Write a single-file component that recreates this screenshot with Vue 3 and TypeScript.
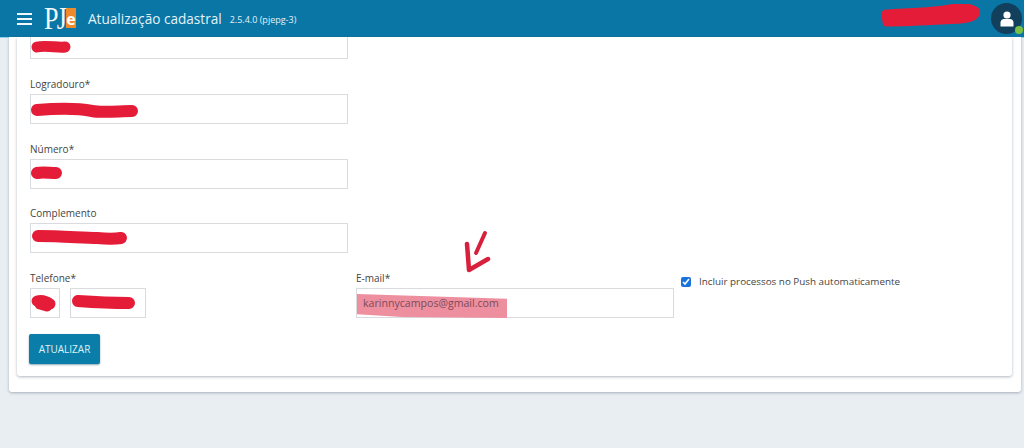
<script setup lang="ts">
interface Field {
  label: string
  scribble: string
  left: number
  width: number
  height: number
  gap: number
}

const fields: Field[] = [
  { label: 'Logradouro*', scribble: 'M5 9 C30 7 50 8 60 10 C70 12 88 10 100 10', left: 1, width: 110, height: 16, gap: 18 },
  { label: 'Número*', scribble: 'M5 7 C10 6 18 7 24 7', left: 1, width: 32, height: 14, gap: 18 },
  { label: 'Complemento', scribble: 'M5 6 C30 6 50 8 64 8 C74 9 82 9 88 8', left: 2, width: 97, height: 14, gap: 17 }
]
</script>

<template>
  <div class="page">
    <header class="topbar">
      <div class="menu" aria-label="Menu">
        <span></span><span></span><span></span>
      </div>
      <div class="logo"><span class="pj">PJ</span><span class="e">e</span></div>
      <span class="title">Atualização cadastral</span>
      <span class="version">2.5.4.0 (pjepg-3)</span>
      <svg class="head-scribble" width="102" height="24" viewBox="0 0 102 24">
        <path d="M6 10 C30 9 55 8 70 5 C80 3 90 4 95 7 C97 11 92 14 80 15 C60 16 30 18 7 18 Z" fill="#e41c38" stroke="#e41c38" stroke-width="9" stroke-linejoin="round" />
      </svg>
      <div class="avatar">
        <svg width="14" height="16" viewBox="0 0 14 16">
          <circle cx="7" cy="4" r="3.6" fill="#fff" />
          <path d="M0.5 15.5 V11.5 C0.5 9.3 2.2 8 4 8 H10 C11.8 8 13.5 9.3 13.5 11.5 V15.5 Z" fill="#fff" />
        </svg>
        <i class="status"></i>
      </div>
    </header>

    <main class="outer">
      <section class="inner">
        <div class="input cut">
          <svg class="scribble first" width="42" height="14" viewBox="0 0 42 14">
            <path d="M5 7 C14 5 26 8 33 7" fill="none" stroke="#e41c38" stroke-width="11" stroke-linecap="round" />
          </svg>
        </div>

        <div v-for="f in fields" :key="f.label" class="field" :style="{ marginTop: f.gap + 'px' }">
          <label>{{ f.label }}</label>
          <div class="input">
            <svg class="scribble" :style="{ left: f.left + 'px' }" :width="f.width" :height="f.height" :viewBox="`0 0 ${f.width} ${f.height}`">
              <path :d="f.scribble" fill="none" stroke="#e41c38" stroke-width="12" stroke-linecap="round" />
            </svg>
          </div>
        </div>

        <div class="last-row">
          <div class="phone">
            <label>Telefone*</label>
            <div class="phone-inputs">
              <div class="input ddd">
                <svg class="scribble" width="26" height="18" viewBox="0 0 26 18">
                  <path d="M5 6 C9 5 14 6 18 9 M8 9 L15 11" fill="none" stroke="#e41c38" stroke-width="11" stroke-linecap="round" />
                </svg>
              </div>
              <div class="input tel">
                <svg class="scribble" width="68" height="14" viewBox="0 0 68 14">
                  <path d="M6 6 C20 7 42 8 57 8" fill="none" stroke="#e41c38" stroke-width="12" stroke-linecap="round" />
                </svg>
              </div>
            </div>
          </div>

          <div class="email">
            <svg class="arrow" width="32" height="46" viewBox="0 0 32 46">
              <path d="M25 6 L16 26" fill="none" stroke="#d8203c" stroke-width="4" stroke-linecap="round" />
              <path d="M7 17 L9 43 L28 32" fill="none" stroke="#d8203c" stroke-width="4.5" stroke-linecap="round" stroke-linejoin="round" />
            </svg>
            <label>E-mail*</label>
            <div class="input mail">
              <span class="highlight"></span>
              <span class="value">karinnycampos@gmail.com</span>
            </div>
          </div>

          <label class="push">
            <input type="checkbox" checked />
            <span>Incluir processos no Push automaticamente</span>
          </label>
        </div>

        <button class="submit" type="button">ATUALIZAR</button>
      </section>
    </main>
  </div>
</template>

<style>
html, body {
  margin: 0;
  background: #e9eef2;
}
</style>

<style scoped>
.page {
  width: 1024px;
  height: 448px;
  overflow: hidden;
  background: #e9eef2;
  font-family: "Open Sans", "Noto Sans", sans-serif;
  color: #444;
}
.topbar {
  height: 37px;
  background: #0a76a6;
  border-bottom: 1px solid #8fd0ea;
  display: flex;
  align-items: center;
  color: #e4f2f8;
  padding: 0 2px 0 17px;
}
.menu {
  width: 15px;
  display: flex;
  flex-direction: column;
  gap: 3px;
  margin-right: 12px;
}
.menu span {
  height: 2px;
  background: #f0f8fb;
}
.logo {
  display: flex;
  align-items: flex-start;
  height: 32px;
  width: 33px;
  margin-right: 11px;
}
.pj {
  display: block;
  width: 22px;
  flex: none;
  font-family: "Liberation Serif", serif;
  font-size: 31px;
  line-height: 32px;
  color: #f2f8fb;
  letter-spacing: -2px;
  transform: scaleX(0.84);
  transform-origin: left center;
}
.e {
  width: 10px;
  height: 20px;
  box-sizing: border-box;
  padding-top: 2px;
  margin-top: 5px;
  background: #ee8a2c;
  color: #fff;
  font-family: "Open Sans", sans-serif;
  font-weight: 700;
  font-size: 16px;
  line-height: 18px;
  text-align: center;
  flex: none;
}
.title {
  font-size: 13.6px;
  margin-right: 8px;
}
.version {
  font-size: 9px;
  margin-top: 2px;
}
.head-scribble {
  margin-left: auto;
  margin-right: 9px;
  margin-top: -3px;
  margin-bottom: 3px;
}
.avatar {
  width: 31px;
  height: 31px;
  border-radius: 50%;
  background: #123f5c;
  display: flex;
  align-items: center;
  justify-content: center;
  position: relative;
}
.status {
  position: absolute;
  right: -1px;
  bottom: 0;
  width: 8px;
  height: 8px;
  border-radius: 50%;
  background: #7ac143;
}
.outer {
  margin: -1px 3px 0 9px;
  height: 355px;
  background: #fff;
  border-radius: 0 0 3px 3px;
  box-shadow: 0 1px 3px rgba(80, 95, 115, 0.45);
  padding: 0 9px 0 8px;
}
.inner {
  height: 339px;
  box-sizing: border-box;
  background: #fff;
  border-radius: 0 0 3px 3px;
  box-shadow: 0 1px 3px rgba(80, 95, 115, 0.45);
  padding: 0 13px;
}
.input {
  position: relative;
  width: 318px;
  height: 30px;
  box-sizing: border-box;
  border: 1px solid #d9dbdf;
  background: #fff;
}
.cut {
  height: 22px;
  border-top: 0;
}
label {
  display: block;
  font-size: 10px;
  line-height: 15px;
  margin-bottom: 2px;
  color: #444;
}
.scribble {
  position: absolute;
  left: 1px;
  top: 6px;
  overflow: visible;
}
.first {
  top: 3px;
}
.last-row {
  display: flex;
  margin-top: 18px;
}
.phone {
  width: 326px;
}
.phone-inputs {
  display: flex;
  gap: 10px;
}
.ddd {
  width: 30px;
}
.tel {
  width: 76px;
}
.email {
  position: relative;
  width: 318px;
  margin-right: 7px;
}
.arrow {
  position: absolute;
  left: 104px;
  top: -44px;
}
.mail {
  display: flex;
  align-items: center;
  padding-left: 6px;
}
.highlight {
  position: absolute;
  left: 0;
  top: 5px;
  width: 150px;
  height: 24px;
  background: #ee8f9f;
  clip-path: polygon(0 0, 100% 20%, 100% 100%, 30% 96%, 0 84%);
}
.value {
  position: relative;
  font-size: 10.6px;
  color: #7d4a58;
}
.push {
  display: flex;
  align-items: center;
  height: 15px;
  margin: 3px 0 0;
  align-self: flex-start;
  gap: 8px;
}
.push input {
  width: 10px;
  height: 10px;
  margin: 0;
  accent-color: #1a73d8;
}
.push span {
  font-size: 9.85px;
}
.submit {
  display: block;
  margin: 16px 0 0 -1px;
  width: 71px;
  height: 30px;
  border: 0;
  border-radius: 2px;
  background: #0a7ea8;
  color: #dff2f8;
  font-family: inherit;
  font-size: 10px;
  padding: 0;
  box-shadow: 0 1px 2px rgba(0, 60, 90, 0.45);
}
</style>
